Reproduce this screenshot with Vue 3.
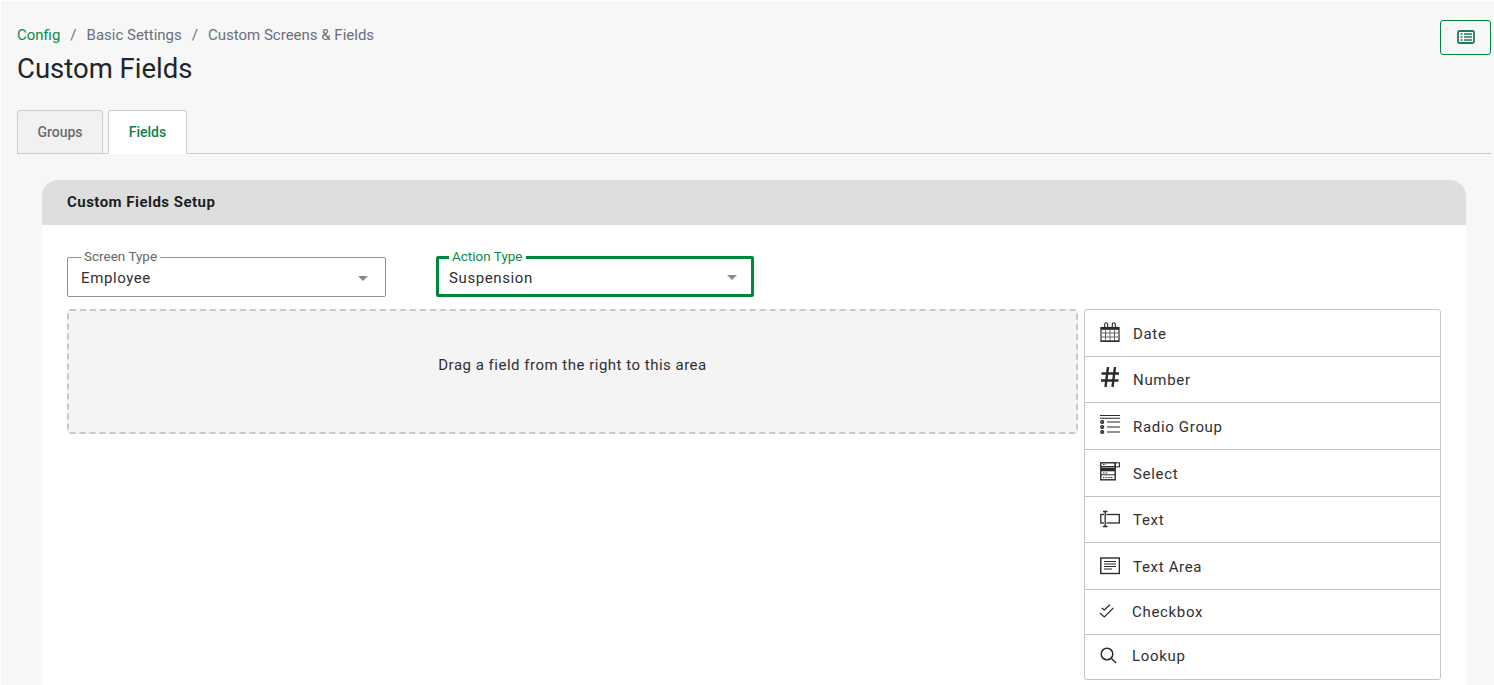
<script setup>
const screens = [
  { label: 'Screen Type', value: 'Employee', focus: false },
  { label: 'Action Type', value: 'Suspension', focus: true },
]
const fields = [
  { name: 'Date', icon: 'date', h: 47, nudge: 'pt' },
  { name: 'Number', icon: 'number', h: 46 },
  { name: 'Radio Group', icon: 'radio', h: 47, nudge: 'pt' },
  { name: 'Select', icon: 'select', h: 47, nudge: 'pt' },
  { name: 'Text', icon: 'text', h: 46 },
  { name: 'Text Area', icon: 'area', h: 47, nudge: 'pt' },
  { name: 'Checkbox', icon: 'check', h: 45, tight: true },
  { name: 'Lookup', icon: 'lookup', h: 44, tight: true, nudge: 'pb' },
]
</script>

<template>
  <div class="page">
    <header class="top">
      <div>
        <nav class="crumbs">
          <span class="link">Config</span><span class="sep">/</span><span>Basic Settings</span><span class="sep">/</span><span>Custom Screens &amp; Fields</span>
        </nav>
        <h1>Custom Fields</h1>
      </div>
      <button class="view-btn" aria-label="List view">
        <svg width="18" height="14" viewBox="0 0 18 14" fill="none" stroke="#1f7a5c">
          <rect x="1" y="1" width="16" height="12" rx="1.5" stroke-width="1.8" />
          <path d="M3.5 4h2M3.5 7h2M3.5 10h2M7 4h8M7 7h8M7 10h8" stroke-width="1.7" />
        </svg>
      </button>
    </header>

    <div class="tabs">
      <div class="tab">Groups</div>
      <div class="tab active">Fields</div>
    </div>

    <section class="panel">
      <h2 class="panel-head">Custom Fields Setup</h2>
      <div class="panel-body">
        <div class="selects">
          <fieldset v-for="s in screens" :key="s.label" class="select" :class="{ focus: s.focus }">
            <legend>{{ s.label }}</legend>
            <span class="value">{{ s.value }}</span>
            <span class="caret"></span>
          </fieldset>
        </div>
        <div class="work">
          <div class="drop">Drag a field from the right to this area</div>
          <ul class="palette">
            <li v-for="f in fields" :key="f.name" :class="[{ tight: f.tight }, f.nudge]" :style="{ height: f.h + 'px' }">
              <svg class="ico" :class="'ico-' + f.icon" width="20" height="20" viewBox="0 0 20 20" fill="none" stroke="#2b2b2b">
                <template v-if="f.icon === 'date'">
                  <rect x="1" y="5.500" width="18" height="14" stroke-width="1.200" />
                  <rect x="1" y="5" width="18" height="2.800" fill="#2b2b2b" stroke="none" />
                  <path d="M1.500 11h17M1.500 15h17M5.500 8v11M10 8v11M14.500 8v11" stroke-width=".9" stroke="#555a66" />
                  <path d="M1 19.200h18" stroke-width="1.600" />
                  <path d="M4.700 5.500V2.300a1.500 1.500 0 0 1 3 0v3.200M12.300 5.500V2.300a1.500 1.500 0 0 1 3 0v3.200" stroke-width="1.100" />
                </template>
                <template v-else-if="f.icon === 'number'">
                  <path d="M8 0 5.500 20M15 0l-2.500 20M1.500 6.500H19M1 13.500h17.500" stroke-width="2.400" />
                </template>
                <template v-else-if="f.icon === 'radio'">
                  <path d="M0 .5h20M0 3.300h20M7 7h13M7 12h13M7 17h13" stroke-width="1.100" />
                  <circle cx="2.200" cy="7" r="1.500" stroke-width="1.200" fill="#666" />
                  <circle cx="2.200" cy="12" r="1.500" stroke-width="1.200" fill="#666" />
                  <circle cx="2.200" cy="17" r="1.500" stroke-width="1.200" fill="#666" />
                </template>
                <template v-else-if="f.icon === 'select'">
                  <rect x=".8" y=".8" width="14.400" height="17" stroke-width="1.400" />
                  <rect x="15.200" y=".8" width="4.200" height="4" stroke-width="1.100" />
                  <rect x="1" y="5.500" width="14" height="3.800" fill="#2b2b2b" stroke="none" />
                  <path d="M1 4.500h14M1 12.800h14" stroke-width="1" />
                  <path d="M3 2.500h3M3 11h5M3 15.500h10" stroke-width="1" stroke-dasharray="1 .6" />
                </template>
                <template v-else-if="f.icon === 'text'">
                  <rect x=".8" y="4.500" width="18.500" height="8.500" stroke-width="1.300" />
                  <rect x="4" y="3" width="2.400" height="12" fill="#fff" stroke="none" />
                  <path d="M3 1.500h4.500M5.200 1.500v15M3 16.500h4.500" stroke-width="1.300" />
                </template>
                <template v-else-if="f.icon === 'area'">
                  <rect x=".8" y="2" width="18.600" height="15.500" stroke-width="1.400" />
                  <path d="M4 5.500h12M4 8h12M4 10.500h12M4 13h8" stroke-width="1.100" />
                </template>
                <template v-else-if="f.icon === 'check'">
                  <path d="M2.700 6l2.600 2L11 2.700M1 11l4.300 4 9-9" stroke-width="1.200" />
                </template>
                <template v-else>
                  <circle cx="8" cy="8" r="5.800" stroke-width="1.500" />
                  <path d="m12.300 12.300 4.700 4.700" stroke-width="1.500" />
                </template>
              </svg>
              <span>{{ f.name }}</span>
            </li>
          </ul>
        </div>
      </div>
    </section>
  </div>
</template>

<style scoped>
.page {
  height: 685px;
  overflow: hidden;
  box-sizing: border-box;
  background: #f7f7f7;
  border-top: 1px solid #fff;
  border-left: 1px solid #fff;
  padding: 0 3px 0 16px;
  font-family: Roboto, "Liberation Sans", sans-serif;
  color: #2f2f33;
}
.top {
  display: flex;
  justify-content: space-between;
  align-items: flex-start;
}
.crumbs {
  display: flex;
  margin-top: 25px;
  font-size: 15px;
  line-height: 19px;
  color: #6b6f7c;
}
.link { color: #0e8a4a; }
.sep { margin: 0 10px; }
h1 {
  margin: 5px 0 0;
  font-size: 27.500px;
  line-height: 38px;
  font-weight: 400;
  color: #212529;
}
.view-btn {
  display: flex;
  align-items: center;
  justify-content: center;
  width: 51px;
  height: 35px;
  margin-top: 19px;
  padding: 0 0 1px;
  background: transparent;
  border: 1px solid #00873e;
  border-radius: 3px;
}
.tabs {
  display: flex;
  gap: 5px;
  height: 44px;
  margin-top: 22px;
  box-sizing: border-box;
  border-bottom: 1px solid #cbcbcb;
}
.tab {
  height: 44px;
  box-sizing: border-box;
  width: 86px;
  text-align: center;
  line-height: 43px;
  font-size: 14px;
  font-weight: 500;
  color: #6b6b6b;
  background: #f1f1f1;
  border: 1px solid #cbcbcb;
  border-radius: 3px 3px 0 0;
}
.tab.active {
  width: 79px;
  color: #0e7f4c;
  background: #fff;
  border-bottom-color: #fff;
}
.panel {
  margin: 26px 25px 0;
  background: #fff;
  border-radius: 16px 16px 0 0;
}
.panel-head {
  margin: 0;
  height: 45px;
  padding-left: 25px;
  line-height: 44px;
  font-size: 15px;
  letter-spacing: .47px;
  font-weight: 700;
  color: #1e1e24;
  background: #dedede;
  border-radius: 16px 16px 0 0;
}
.panel-body {
  padding: 33px 25px 20px;
}
.selects {
  display: flex;
  gap: 50px;
}
.select {
  position: relative;
  box-sizing: border-box;
  width: 319px;
  height: 49px;
  margin: -10px 0 0;
  padding: 0 0 0 13px;
  min-width: 0;
  border: 1px solid #8f8f8f;
  border-radius: 2px;
}
legend {
  margin-left: 0;
  padding: 0 3px 2px;
  font-size: 13.500px;
  line-height: 16px;
  color: #666;
}
.value {
  display: block;
  font-size: 15px;
  letter-spacing: .6px;
  line-height: 24px;
}
.caret {
  position: absolute;
  right: 17px;
  top: 10px;
  width: 0;
  height: 0;
  border: 5px solid transparent;
  border-top-color: #8a8a8a;
  border-bottom: 0;
}
.select.focus {
  width: 318px;
  border: 3px solid #00873e;
  padding-left: 10px;
}
.select.focus legend { color: #0e8a4a; }
.select.focus .caret { right: 14px; top: 9px; }
.work {
  display: flex;
  gap: 6px;
  align-items: flex-start;
  margin-top: 12px;
}
.drop {
  box-sizing: border-box;
  width: 1011px;
  height: 125px;
  padding-top: 44px;
  text-align: center;
  font-size: 15px;
  letter-spacing: .5px;
  line-height: 20px;
  background: #f4f4f4;
  border: 2px dashed #c9c9c9;
  border-radius: 3px;
}
.palette {
  flex: 1;
  margin: 0;
  padding: 0;
  list-style: none;
  box-sizing: border-box;
  width: 357px;
  border: 1px solid #c4c4c4;
  border-radius: 3px;
}
.palette li {
  display: flex;
  align-items: center;
  gap: 13px;
  padding-left: 15px;
  box-sizing: border-box;
  font-size: 15px;
  letter-spacing: .68px;
  border-bottom: 1px solid #c4c4c4;
}
.palette li.pt { padding-top: 2px; }
.palette li.pb { padding-bottom: 3px; }
.palette li:last-child { border-bottom: 0; }
.palette li.tight .ico { transform: translateX(-1px); margin-right: -1px; }
.ico-date, .ico-radio, .ico-select { margin-bottom: 4px; }
.ico-number { margin-bottom: 5px; }
.ico-area { margin-bottom: 2px; }
</style>

<style>
body { margin: 0; background: #fff; }
</style>
